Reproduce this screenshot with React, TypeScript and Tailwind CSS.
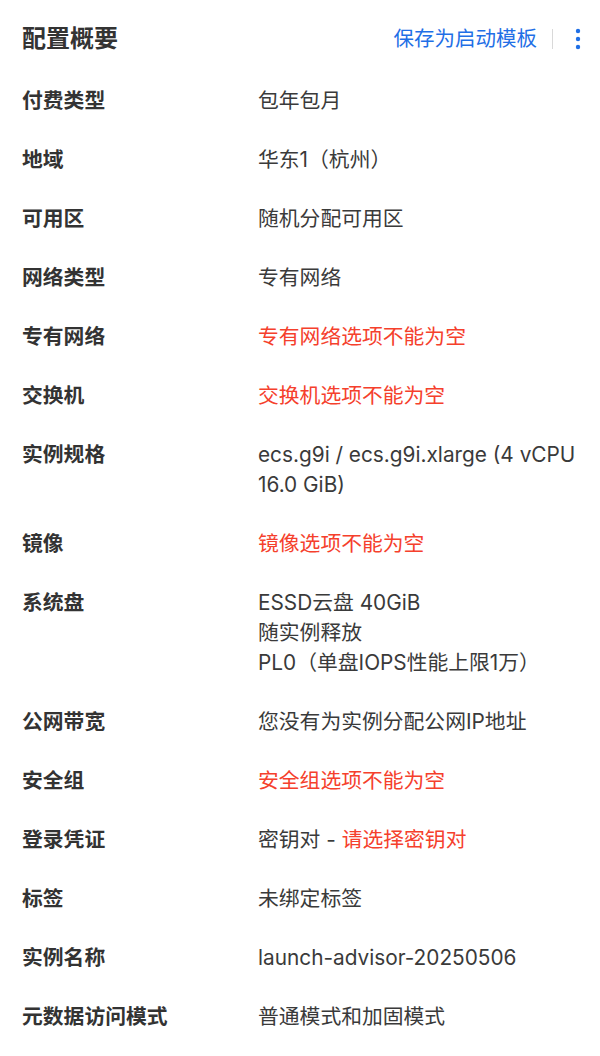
import React from 'react';

type Row = {
    label: string,
    lines: React.ReactNode[],
    error?: boolean,
}

const rows: Row[] = [
    {label: "付费类型", lines: ["包年包月"]},
    {label: "地域", lines: ["华东1（杭州）"]},
    {label: "可用区", lines: ["随机分配可用区"]},
    {label: "网络类型", lines: ["专有网络"]},
    {label: "专有网络", lines: ["专有网络选项不能为空"], error: true},
    {label: "交换机", lines: ["交换机选项不能为空"], error: true},
    {label: "实例规格", lines: ["ecs.g9i / ecs.g9i.xlarge (4 vCPU", "16.0 GiB)"]},
    {label: "镜像", lines: ["镜像选项不能为空"], error: true},
    {label: "系统盘", lines: ["ESSD云盘 40GiB", "随实例释放", "PL0（单盘IOPS性能上限1万）"]},
    {label: "公网带宽", lines: ["您没有为实例分配公网IP地址"]},
    {label: "安全组", lines: ["安全组选项不能为空"], error: true},
    {
        label: "登录凭证",
        lines: [<>密钥对 - <span className="text-[#f5402c]">请选择密钥对</span></>]
    },
    {label: "标签", lines: ["未绑定标签"]},
    {label: "实例名称", lines: ["launch-advisor-20250506"]},
    {label: "元数据访问模式", lines: ["普通模式和加固模式"]},
];

const App = () => {
    return (
        <div className="w-[600px] bg-white px-[22px] pt-[24px] pb-[24px] font-['Inter','Noto_Sans_CJK_SC',sans-serif] text-[#333]">
            {/*header*/}
            <div className="flex items-center justify-between h-[30px]">
                <h2 className="text-[24px] font-bold leading-[30px] text-[#333]">配置概要</h2>
                <div className="flex items-center">
                    <button className="text-[20.5px] leading-[30px] text-[#1f6fe6]">保存为启动模板</button>
                    <span className="ml-[15px] mr-[22px] h-[20px] w-px bg-[#d9d9d9]"/>
                    <svg width="6" height="24" viewBox="0 0 6 24" className="text-[#1f6fe6] mr-[-3px]">
                        <circle cx="3" cy="4" r="2.2" fill="currentColor"/>
                        <circle cx="3" cy="12" r="2.2" fill="currentColor"/>
                        <circle cx="3" cy="20" r="2.2" fill="currentColor"/>
                    </svg>
                </div>
            </div>
            {/*rows*/}
            <div className="mt-[32px] flex flex-col gap-[29px]">
                {rows.map((row) => (
                    <div key={row.label} className="grid grid-cols-[236px_1fr] text-[20.8px] leading-[30px]">
                        <div className="font-semibold text-[#333]">{row.label}</div>
                        <div className={row.error ? "text-[#f5402c]" : "text-[#3a3a3a]"}>
                            {row.lines.map((line, i) => (
                                <div key={i} className="whitespace-nowrap">{line}</div>
                            ))}
                        </div>
                    </div>
                ))}
            </div>
        </div>
    );
};

export default App;
